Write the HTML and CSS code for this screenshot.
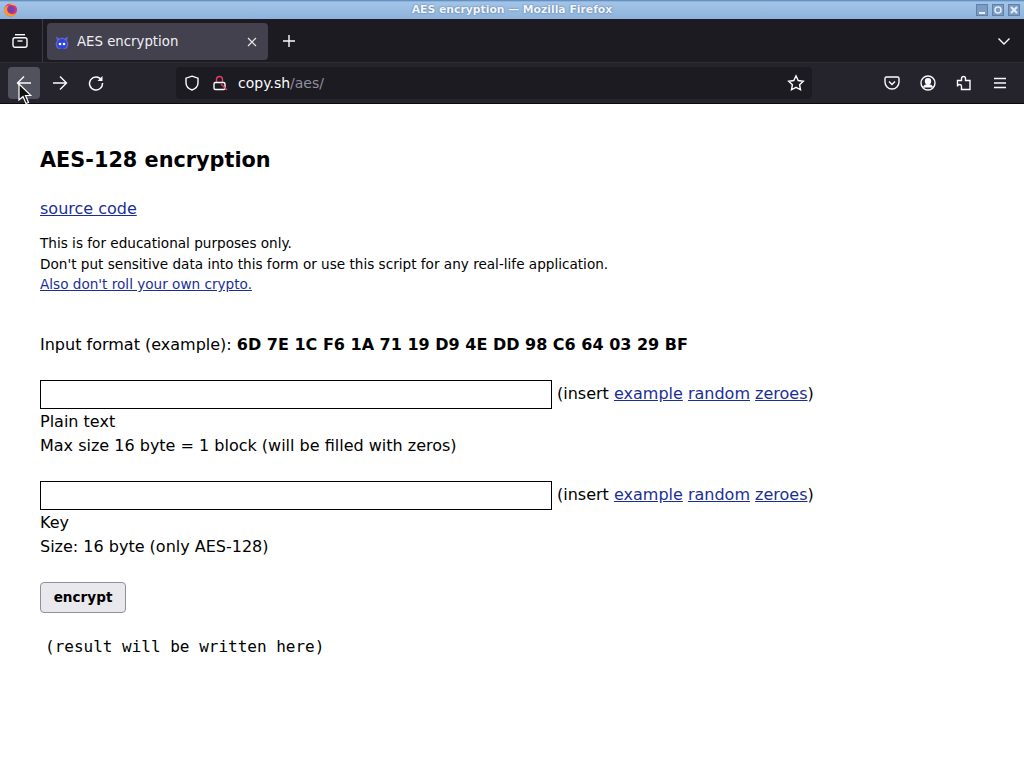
FILE: index.html
```html
<!DOCTYPE html>
<html>
<head>
    <title>AES encryption</title>
    <link rel="stylesheet" href="styles.css">
</head>
<body>
    <div class="titlebar">
        <svg class="app-icon" width="16" height="16" viewBox="0 0 16 16">
            <circle cx="8.500" cy="8" r="6.500" fill="#d9356f"/>
            <circle cx="9" cy="7.500" r="3.500" fill="#7a3fb0"/>
            <path d="M2 8a6.500 6.500 0 0 0 12.500 2.500C12 13 7.500 13 5.500 9.500 4.500 7.500 5 5 7 3.500 4 3.500 2 5.500 2 8z" fill="#f59a2c"/>
            <path d="M6 2c3-1.200 6-.5 8 2-2-.8-5-1.500-8-2z" fill="#f9c13c"/>
        </svg>
        <span class="title-text">AES encryption — Mozilla Firefox</span>
        <div class="win-buttons">
            <span class="win-btn"><svg width="12" height="12" viewBox="0 0 12 12"><rect x="3" y="8" width="6" height="2" fill="#e4edf7"/></svg></span>
            <span class="win-btn"><svg width="12" height="12" viewBox="0 0 12 12"><circle cx="6" cy="6" r="3" fill="none" stroke="#e4edf7" stroke-width="1.500"/></svg></span>
            <span class="win-btn"><svg width="12" height="12" viewBox="0 0 12 12"><path d="M3 3l6 6M9 3l-6 6" stroke="#e4edf7" stroke-width="2"/></svg></span>
        </div>
    </div>

    <div class="tabbar">
        <div class="tab-side">
            <svg class="icon" width="16" height="16" viewBox="0 0 16 16" fill="none" stroke="#fbfbfe" stroke-width="1.400">
                <path d="M3 1.700h10"/>
                <rect x="1" y="4.700" width="14" height="9.600" rx="2"/>
                <path d="M5.500 8h5"/>
            </svg>
        </div>
        <div class="tab">
            <svg class="favicon" width="16" height="16" viewBox="0 0 16 16">
                <path d="M2 2.500l3.500 2 2.500-1 2.500 1 3.500-2-1 4 1.500 3-1 4-2 1.500H4.500l-2-1.500-1-4 1.500-3z" fill="#6b62c8"/>
                <circle cx="8" cy="10" r="5" fill="#2a46e0"/>
                <circle cx="6" cy="10" r="1.300" fill="#fff"/>
                <circle cx="10" cy="10" r="1.300" fill="#fff"/>
            </svg>
            <span class="tab-title">AES encryption</span>
            <svg class="tab-close" width="10" height="10" viewBox="0 0 10 10"><path d="M1 1l8 8M9 1l-8 8" stroke="#e8e8ea" stroke-width="1.200"/></svg>
        </div>
        <svg class="new-tab" width="14" height="14" viewBox="0 0 14 14"><path d="M7 1v12M1 7h12" stroke="#fbfbfe" stroke-width="1.400"/></svg>
        <svg class="tab-list" width="14" height="14" viewBox="0 0 14 14" fill="none"><path d="M1.500 4.500L7 10l5.500-5.500" stroke="#fbfbfe" stroke-width="1.400"/></svg>
    </div>

    <div class="toolbar">
        <div class="nav-btn active">
            <svg width="16" height="16" viewBox="0 0 16 16" fill="none" stroke="#fbfbfe" stroke-width="1.400"><path d="M15 8H1.500M8 1.500L1.500 8 8 14.500"/></svg>
        </div>
        <div class="nav-btn">
            <svg width="16" height="16" viewBox="0 0 16 16" fill="none" stroke="#fbfbfe" stroke-width="1.400"><path d="M1 8h13.500M8 1.500L14.500 8 8 14.500"/></svg>
        </div>
        <div class="nav-btn">
            <svg width="16" height="16" viewBox="0 0 16 16" fill="none" stroke="#fbfbfe" stroke-width="1.500"><path d="M13.500 5A6.500 6.500 0 1 0 14.500 8"/><path d="M14.500 1v5h-5" fill="#fbfbfe" stroke="none"/></svg>
        </div>
        <div class="urlbar">
            <svg width="16" height="16" viewBox="0 0 16 16" fill="none" stroke="#fbfbfe" stroke-width="1.400"><path d="M8 1.200l6 2v4.500c0 3.500-2.500 6-6 7.300-3.500-1.300-6-3.800-6-7.300V3.200z"/></svg>
            <svg class="lock" width="16" height="16" viewBox="0 0 16 16" fill="none" stroke-width="1.400">
                <path d="M4.500 7V4.500a3 3 0 0 1 6 0V7" stroke="#e23a6a"/>
                <rect x="2" y="7.500" width="11" height="7" rx="1.500" stroke="#fbfbfe"/>
                <path d="M9 9l6 6" stroke="#e23a6a"/>
            </svg>
            <span class="url"><span class="url-host">copy.sh</span>/aes/</span>
            <svg class="star" width="18" height="18" viewBox="0 0 18 18" fill="none" stroke="#fbfbfe" stroke-width="1.400"><path d="M9 1.800l2.200 4.700 5.100.7-3.700 3.500.9 5.100L9 13.400l-4.500 2.400.9-5.100-3.700-3.500 5.100-.7z"/></svg>
        </div>
        <div class="toolbar-right">
            <svg width="16" height="16" viewBox="0 0 16 16" fill="none" stroke="#fbfbfe" stroke-width="1.400"><path d="M2.500 2h11A1.500 1.500 0 0 1 15 3.500V7A7 7 0 0 1 1 7V3.500A1.500 1.500 0 0 1 2.500 2z"/><path d="M5 6.500L8 9.500 11 6.500"/></svg>
            <svg width="16" height="16" viewBox="0 0 16 16" fill="none" stroke="#fbfbfe" stroke-width="1.400"><circle cx="8" cy="8" r="7"/><circle cx="8" cy="6.300" r="2.500" fill="#fbfbfe"/><path d="M3.500 12.500c1-2 2.500-2.700 4.500-2.700s3.500.7 4.500 2.700" fill="#fbfbfe"/></svg>
            <svg width="16" height="16" viewBox="0 0 16 16" fill="none" stroke="#fbfbfe" stroke-width="1.400"><path d="M1.500 5.500h4V3.500a2 2 0 0 1 4 0v2h4.500v9H5.500v-3a1.800 1.800 0 0 0-4 0z"/></svg>
            <svg width="16" height="16" viewBox="0 0 16 16" fill="none" stroke="#fbfbfe" stroke-width="1.400"><path d="M2 3.500h12M2 8h12M2 12.500h12"/></svg>
        </div>
    </div>

    <!-- mouse pointer from the screenshot -->
    <svg class="cursor" width="14" height="22" viewBox="0 0 14 22"><path d="M1 1v16l4-3.500 3 7 2.500-1-3-7H13z" fill="#111" stroke="#fff" stroke-width="1.200"/></svg>

    <div class="page">
        <h1>AES-128 encryption</h1>
        <p class="source"><a href="#">source code</a></p>
        <p class="notes">
            This is for educational purposes only.<br>
            Don't put sensitive data into this form or use this script for any real-life application.<br>
            <a href="#">Also don't roll your own crypto.</a>
        </p>
        <p class="format">Input format (example): <b>6D 7E 1C F6 1A 71 19 D9 4E DD 98 C6 64 03 29 BF</b></p>

        <div class="field">
            <div class="input-row">
                <input type="text">
                <span class="insert">(insert <a href="#">example</a> <a href="#">random</a> <a href="#">zeroes</a>)</span>
            </div>
            <div class="help">Plain text</div>
            <div class="help">Max size 16 byte = 1 block (will be filled with zeros)</div>
        </div>

        <div class="field">
            <div class="input-row">
                <input type="text">
                <span class="insert">(insert <a href="#">example</a> <a href="#">random</a> <a href="#">zeroes</a>)</span>
            </div>
            <div class="help">Key</div>
            <div class="help">Size: 16 byte (only AES-128)</div>
        </div>

        <button class="encrypt">encrypt</button>
        <pre class="result">(result will be written here)</pre>
    </div>
</body>
</html>
```

FILE: styles.css
```css
html, body {
    margin: 0;
    height: 100%;
    overflow: hidden;
    background-color: #fff;
}

body {
    font-family: "DejaVu Sans", sans-serif;
    font-size: 16px;
    color: #000;
}

a {
    color: #1a2f96;
}

/* window title bar */
.titlebar {
    height: 19px;
    display: flex;
    align-items: center;
    justify-content: center;
    position: relative;
    background: linear-gradient(#4f7fb8 0, #a3c4e6 2px, #8db2dc 100%);
}

.app-icon {
    position: absolute;
    left: 2px;
    top: 2px;
}

.title-text {
    font-size: 10.800px;
    font-weight: bold;
    color: #f2f6fb;
    text-shadow: 0 0 2px #44668c;
}

.win-buttons {
    position: absolute;
    right: 4px;
    top: 4px;
    display: flex;
    gap: 4px;
}

.win-btn {
    width: 12px;
    height: 12px;
    display: flex;
    background-color: #7d9cc4;
    outline: 1px solid #5f80aa;
    outline-offset: -1px;
}

/* tabs */
.tabbar {
    height: 43px;
    display: flex;
    align-items: center;
    background-color: #1c1b22;
    color: #fbfbfe;
}

.tab-side {
    width: 43px;
    height: 43px;
    box-sizing: border-box;
    padding-left: 12px;
    display: flex;
    align-items: center;
    border-right: 1px solid #3a3944;
}

.tab {
    width: 221px;
    height: 37px;
    margin: 2px 0 0 4px;
    padding: 0 11px 0 7px;
    box-sizing: border-box;
    display: flex;
    align-items: center;
    background-color: #42414d;
    border-radius: 4px;
}

.favicon {
    flex: none;
}

.tab-title {
    flex: 1;
    margin-left: 7px;
    font-size: 13.300px;
    line-height: 18px;
    color: #f0f0f4;
}

.new-tab {
    margin-left: 14px;
}

.tab-list {
    margin-left: auto;
    margin-right: 13px;
}

/* navigation toolbar */
.toolbar {
    height: 42px;
    box-sizing: border-box;
    display: flex;
    align-items: center;
    padding: 0 8px;
    background-color: #25242d;
    border-top: 1px solid #2f2e37;
    border-bottom: 1px solid #0c0c0d;
}

.nav-btn {
    width: 32px;
    height: 32px;
    margin-right: 4px;
    display: flex;
    align-items: center;
    justify-content: center;
    border-radius: 4px;
}

.nav-btn.active {
    background-color: #52525e;
}

.urlbar {
    width: 636px;
    height: 32px;
    margin-left: 60px;
    padding: 0 7px 0 8px;
    box-sizing: border-box;
    display: flex;
    align-items: center;
    background-color: #1c1b22;
    border-radius: 4px;
}

.lock {
    margin-left: 12px;
}

.url {
    flex: 1;
    margin-left: 10px;
    font-size: 14px;
    color: #8f8f9d;
}

.url-host {
    color: #fbfbfe;
}

.toolbar-right {
    margin-left: auto;
    display: flex;
    gap: 20px;
    padding-right: 8px;
}

.cursor {
    position: absolute;
    left: 18px;
    top: 83px;
}

/* page content */
.page {
    padding: 1px 40px 0;
}

h1 {
    margin: 42px 0 0;
    font-size: 20.800px;
    line-height: 26px;
}

.source {
    margin: 24px 0 0;
    line-height: 24px;
}

.notes {
    margin: 12px 0 0;
    font-size: 13.600px;
    line-height: 20.500px;
}

.format {
    margin: 38px 0 0;
    line-height: 24px;
}

.field {
    margin-top: 23px;
}

.input-row {
    height: 30px;
    display: flex;
    align-items: flex-start;
}

input {
    width: 512px;
    height: 29px;
    box-sizing: border-box;
    margin: 0;
    border: 1.500px solid #000;
    background-color: #fff;
}

.insert {
    margin: 2px 0 0 5px;
    line-height: 24px;
}

.help {
    line-height: 24px;
}

.encrypt {
    display: block;
    margin-top: 23px;
    width: 86px;
    height: 31px;
    padding: 0;
    font-family: inherit;
    font-size: 13.600px;
    font-weight: bold;
    color: #000;
    background-color: #e9e9ed;
    border: 1px solid #8f8f9d;
    border-radius: 4px;
}

.result {
    margin: 22px 0 0;
    padding-left: 5px;
    font-family: "DejaVu Sans Mono", monospace;
    font-size: 16px;
    line-height: 24px;
}
```
